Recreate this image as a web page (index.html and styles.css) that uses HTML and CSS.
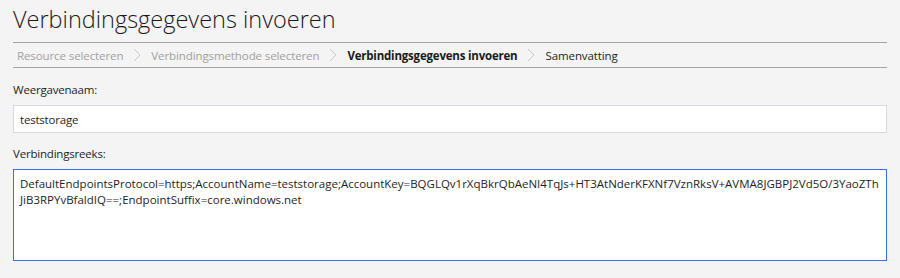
FILE: index.html
```html
<!DOCTYPE html>
<html lang="nl">
<head>
<meta charset="utf-8">
<title>Verbindingsgegevens invoeren</title>
<link rel="stylesheet" href="styles.css">
</head>
<body>
<div class="page">
  <h1 class="title">Verbindingsgegevens invoeren</h1>
  <nav class="steps">
    <span class="step done">Resource selecteren</span>
    <svg class="chev" width="8" height="14" viewBox="0 0 8 14"><path d="M1 1 L7 7 L1 13" fill="none" stroke="#c8c8c8" stroke-width="1"/></svg>
    <span class="step done">Verbindingsmethode selecteren</span>
    <svg class="chev" width="8" height="14" viewBox="0 0 8 14"><path d="M1 1 L7 7 L1 13" fill="none" stroke="#c8c8c8" stroke-width="1"/></svg>
    <span class="step current">Verbindingsgegevens invoeren</span>
    <svg class="chev" width="8" height="14" viewBox="0 0 8 14"><path d="M1 1 L7 7 L1 13" fill="none" stroke="#c8c8c8" stroke-width="1"/></svg>
    <span class="step next">Samenvatting</span>
  </nav>
  <form class="form">
    <label class="label" for="naam">Weergavenaam:</label>
    <input class="input" id="naam" type="text" value="teststorage">
    <label class="label label-gap" for="reeks">Verbindingsreeks:</label>
    <textarea class="textarea" id="reeks">DefaultEndpointsProtocol=https;AccountName=teststorage;AccountKey=BQGLQv1rXqBkrQbAeNI4TqJs+HT3AtNderKFXNf7VznRksV+AVMA8JGBPJ2Vd5O/3YaoZThJiB3RPYvBfaldIQ==;EndpointSuffix=core.windows.net</textarea>
  </form>
</div>
</body>
</html>
```
FILE: styles.css
```css
html, body {
  margin: 0;
  padding: 0;
  background: #f4f4f4;
}
body {
  font-family: "Open Sans", "Noto Sans", sans-serif;
  color: #1e1e1e;
}
.page {
  padding: 0 13px;
}
.title {
  margin: 0;
  height: 42px;
  box-sizing: border-box;
  padding-top: 3px;
  font-size: 23.5px;
  line-height: 32px;
  font-weight: 300;
  color: #1a1a1a;
}
.steps {
  display: flex;
  align-items: center;
  height: 26px;
  box-sizing: border-box;
  border-top: 1px solid #a6a6a6;
  border-bottom: 1px solid #a6a6a6;
  padding-left: 4px;
  font-size: 11.5px;
  letter-spacing: -0.1px;
}
.step { white-space: nowrap; }
.done { color: #a0a0a0; }
.current { font-weight: 700; color: #1a1a1a; letter-spacing: -0.2px; }
.next { color: #1e1e1e; }
.chev { margin: 0 10px; }
.form {
  display: flex;
  flex-direction: column;
  margin: 0;
  padding-top: 14px;
}
.label {
  font-size: 11.5px;
  letter-spacing: -0.2px;
  line-height: 16px;
  color: #1e1e1e;
  margin-bottom: 7px;
}
.label-gap {
  margin-top: 13px;
}
.input {
  height: 28px;
  box-sizing: border-box;
  border: 1px solid #d8d8e0;
  background: #fff;
  padding: 0 6px;
  margin: 0;
  font-family: inherit;
  font-size: 11.5px;
  letter-spacing: -0.2px;
  color: #1e1e1e;
  outline: none;
}
.textarea {
  height: 92px;
  box-sizing: border-box;
  border: 1px solid #3b6cf2;
  background: #fff;
  padding: 6px;
  margin: 0;
  font-family: inherit;
  font-size: 11.5px;
  letter-spacing: 0;
  line-height: 16px;
  color: #1e1e1e;
  resize: none;
  outline: none;
  word-break: break-all;
  overflow: hidden;
}
```
